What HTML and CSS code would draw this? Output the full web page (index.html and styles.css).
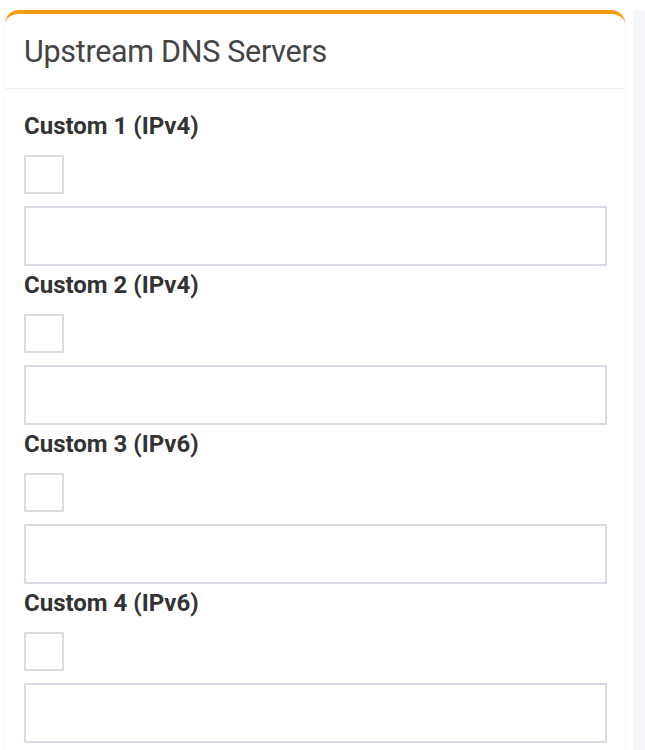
FILE: index.html
```html
<!DOCTYPE html>
<html>
<head>
<meta charset="utf-8">
<link rel="stylesheet" href="styles.css">
</head>
<body>
<div class="page">
  <div class="card">
    <div class="card-header">
      <h3 class="card-title">Upstream DNS Servers</h3>
    </div>
    <div class="card-body">
      <div class="field">
        <label class="field-label">Custom 1 (IPv4)</label>
        <div class="check"></div>
        <div class="text-input"></div>
      </div>
      <div class="field">
        <label class="field-label">Custom 2 (IPv4)</label>
        <div class="check"></div>
        <div class="text-input"></div>
      </div>
      <div class="field">
        <label class="field-label">Custom 3 (IPv6)</label>
        <div class="check"></div>
        <div class="text-input"></div>
      </div>
      <div class="field">
        <label class="field-label">Custom 4 (IPv6)</label>
        <div class="check"></div>
        <div class="text-input"></div>
      </div>
    </div>
  </div>
  <div class="side"></div>
</div>
</body>
</html>
```

FILE: styles.css
```css
html, body {
  margin: 0;
  padding: 0;
  background: #ffffff;
  font-family: "Source Sans Pro", Roboto, "Liberation Sans", sans-serif;
  color: #333;
}
.page {
  display: flex;
  padding: 10px 0 0 5px;
  height: 740px;
  overflow: hidden;
}
.card {
  width: 620px;
  flex: none;
  background: #fff;
  border-top: 4px solid #f39c12;
  border-radius: 14px 14px 0 0;
  box-shadow: 0 0 2px rgba(0,0,0,0.08);
}
.side {
  flex: 1;
  margin-left: 8px;
  background: #f6f7fa;
}
.card-header {
  height: 74px;
  border-bottom: 1px solid #f0f0f0;
  display: flex;
  align-items: center;
  padding-left: 19px;
}
.card-title {
  margin: 0;
  font-weight: 400;
  font-size: 30.5px;
  color: #444;
  letter-spacing: -0.3px;
}
.card-body {
  padding: 25px 18px 0 19px;
}
.field-label {
  display: block;
  font-weight: 700;
  font-size: 24px;
  line-height: 24px;
  color: #333;
}
.check {
  width: 36px;
  height: 35px;
  border: 2px solid #dedbd6;
  margin-top: 17px;
}
.text-input {
  height: 56px;
  border: 2px solid #d6dbe6;
  margin-top: 12px;
  margin-bottom: 7px;
}
```
